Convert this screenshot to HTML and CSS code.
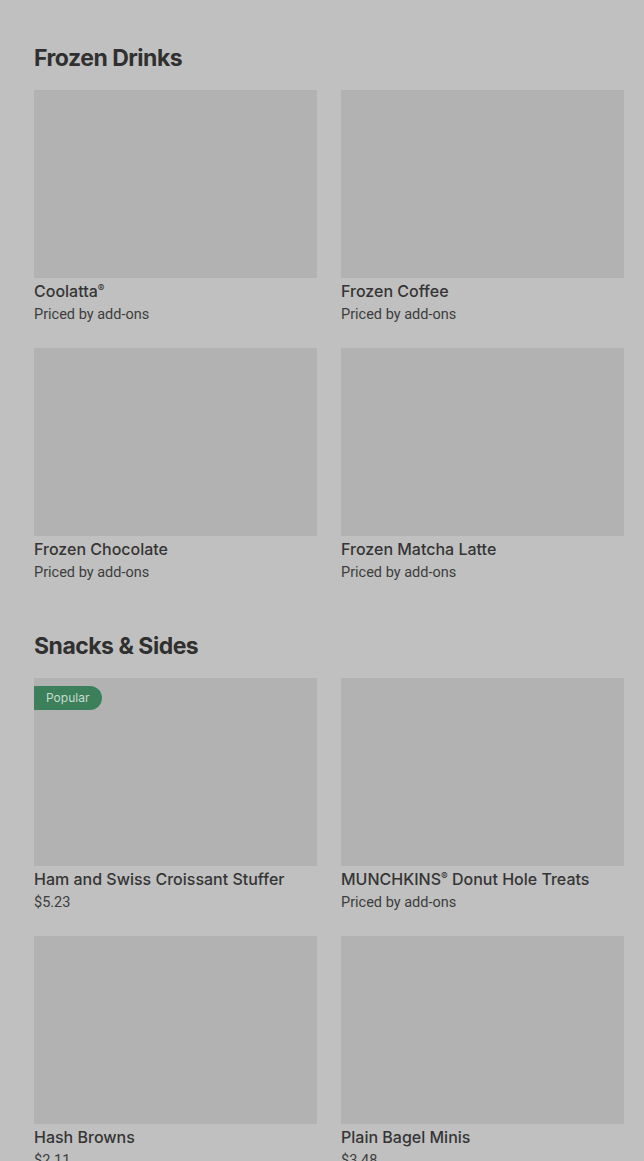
FILE: index.html
```html
<!DOCTYPE html>
<html lang="en">
<head>
<meta charset="utf-8">
<title>Menu</title>
<link rel="stylesheet" href="styles.css">
</head>
<body>
<main class="menu">
  <section class="category">
    <h2 class="category-title">Frozen Drinks</h2>
    <div class="grid">
      <article class="item"><div class="thumb"></div><h3 class="item-name">Coolatta<sup>®</sup></h3><p class="item-price">Priced by add-ons</p></article>
      <article class="item"><div class="thumb"></div><h3 class="item-name">Frozen Coffee</h3><p class="item-price">Priced by add-ons</p></article>
      <article class="item"><div class="thumb"></div><h3 class="item-name">Frozen Chocolate</h3><p class="item-price">Priced by add-ons</p></article>
      <article class="item"><div class="thumb"></div><h3 class="item-name">Frozen Matcha Latte</h3><p class="item-price">Priced by add-ons</p></article>
    </div>
  </section>
  <section class="category">
    <h2 class="category-title">Snacks &amp; Sides</h2>
    <div class="grid">
      <article class="item"><div class="thumb"><span class="badge">Popular</span></div><h3 class="item-name">Ham and Swiss Croissant Stuffer</h3><p class="item-price">$5.23</p></article>
      <article class="item"><div class="thumb"></div><h3 class="item-name">MUNCHKINS<sup>®</sup> Donut Hole Treats</h3><p class="item-price">Priced by add-ons</p></article>
      <article class="item"><div class="thumb"></div><h3 class="item-name">Hash Browns</h3><p class="item-price">$2.11</p></article>
      <article class="item"><div class="thumb"></div><h3 class="item-name">Plain Bagel Minis</h3><p class="item-price">$3.48</p></article>
    </div>
  </section>
</main>
</body>
</html>
```
FILE: styles.css
```css
html, body {
  margin: 0;
  padding: 0;
  background: #c0c0c0;
}
body {
  font-family: Inter, "Liberation Sans", sans-serif;
  color: #333333;
}
.menu {
  padding: 42px 20px 0 34px;
}
.category + .category {
  margin-top: 47px;
}
.category-title {
  margin: 0 0 16px;
  font-size: 23px;
  line-height: 32px;
  font-weight: 700;
  letter-spacing: -0.5px;
  color: #303030;
}
.grid {
  display: grid;
  grid-template-columns: 283px 283px;
  column-gap: 24px;
  row-gap: 23px;
}
.item {
  display: flex;
  flex-direction: column;
}
.thumb {
  position: relative;
  height: 188px;
  background: #b2b2b2;
}
.badge {
  position: absolute;
  left: 0;
  top: 8px;
  height: 24px;
  line-height: 24px;
  padding: 0 13px 0 12px;
  background: #3b7f5b;
  color: #c9dccf;
  font-size: 12px;
  border-radius: 0 12px 12px 0;
}
.item-name {
  margin: 1px 0 0;
  font-family: Inter, "Liberation Sans", sans-serif;
  font-size: 16px;
  line-height: 24px;
  font-weight: 500;
  color: #353535;
}
.item-name sup {
  font-size: 10px;
  vertical-align: 5px;
  line-height: 0;
}
.item-price {
  margin: 1px 0 0;
  font-family: Roboto, "Liberation Sans", sans-serif;
  font-size: 14.5px;
  line-height: 21px;
  color: #3d3d3d;
}
```
